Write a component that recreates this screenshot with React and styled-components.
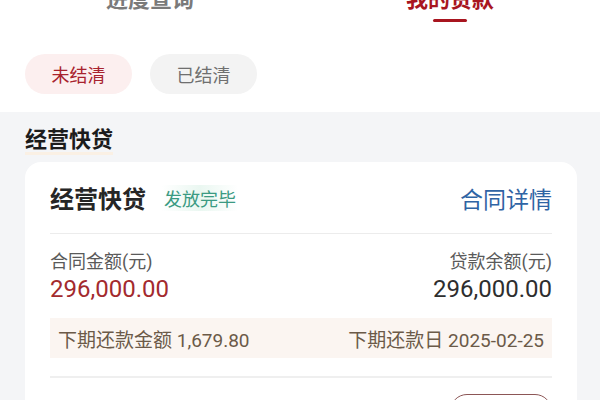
import React from 'react'
import styled, { createGlobalStyle } from 'styled-components'

const GlobalStyle = createGlobalStyle`
  html, body {
    margin: 0;
    padding: 0;
    background: #f4f5f7;
    font-family: Roboto, "Noto Sans CJK SC", "Noto Sans", sans-serif;
    overflow: hidden;
  }
`

const Header = styled.header`
  background: #ffffff;
  padding-bottom: 18px;
`

const TabBar = styled.nav`
  display: flex;
  margin-top: -16px;
  height: 40px;
`

const Tab = styled.div`
  flex: 1;
  display: flex;
  flex-direction: column;
  align-items: center;
  font-size: 22px;
  font-weight: 700;
  line-height: 32px;
  color: ${p => (p.$active ? '#a8151f' : '#7a7a7a')};
  &::after {
    content: '';
    width: 34px;
    height: 3px;
    border-radius: 2px;
    margin-top: 3px;
    background: ${p => (p.$active ? '#a8151f' : 'transparent')};
  }
`

const FilterRow = styled.div`
  display: flex;
  gap: 18px;
  padding: 30px 25px 0;
`

const Chip = styled.button`
  height: 40px;
  width: 107px;
  padding: 0;
  border: none;
  border-radius: 20px;
  font-family: inherit;
  font-size: 18px;
  background: ${p => (p.$active ? '#fcefef' : '#f3f3f3')};
  color: ${p => (p.$active ? '#a8232e' : '#6f6f6f')};
`

const Section = styled.section`
  padding: 13px 23px 0 25px;
`

const SectionTitle = styled.h2`
  display: inline-block;
  margin: 0 0 7px;
  font-size: 22px;
  font-weight: 700;
  line-height: 30px;
  color: #1c1c1c;
  background: linear-gradient(to top, #faf0e4 0, #faf0e4 3px, transparent 3px);
`

const Card = styled.article`
  background: #ffffff;
  border-radius: 16px;
  padding: 0 25px;
`

const CardHeader = styled.div`
  display: flex;
  align-items: center;
  height: 71px;
  border-bottom: 1px solid #ececec;
`

const CardTitle = styled.span`
  font-size: 24px;
  font-weight: 700;
  color: #262626;
`

const Status = styled.span`
  margin-left: 16px;
  padding: 0 2px;
  font-size: 18px;
  color: #3b9a82;
  background: linear-gradient(to right, #ffffff, #eaf7f1 50%, #ffffff);
`

const DetailLink = styled.a`
  margin-left: auto;
  font-size: 23px;
  color: #2f64a4;
`

const Amounts = styled.div`
  display: flex;
  justify-content: space-between;
  padding-top: 16px;
`

const AmountCol = styled.div`
  display: flex;
  flex-direction: column;
  align-items: ${p => (p.$right ? 'flex-end' : 'flex-start')};
`

const AmountLabel = styled.span`
  font-size: 18px;
  line-height: 24px;
  color: #5a5a5a;
`

const AmountValue = styled.span`
  font-size: 24px;
  line-height: 30px;
  color: ${p => (p.$red ? '#a32a2e' : '#2e2e2e')};
`

const RepayBox = styled.div`
  display: flex;
  justify-content: space-between;
  align-items: center;
  height: 40px;
  margin-top: 14px;
  padding: 0 8px;
  background: #fbf5f1;
  font-size: 19px;
  color: #6b5a48;
`

const Footer = styled.div`
  display: flex;
  justify-content: space-between;
  align-items: flex-start;
  margin-top: 18px;
  padding-top: 16px;
  border-top: 2px solid #efefef;
`

const FooterText = styled.span`
  font-size: 15px;
  color: #c4c4c4;
  margin-left: 6px;
  margin-top: 4px;
`

const OutlineButton = styled.button`
  width: 102px;
  height: 34px;
  border: 1.5px solid #8c5656;
  border-radius: 17px;
  background: #fff;
  font-family: inherit;
  font-size: 16px;
  color: #8c3b3b;
`

export default function App() {
  return (
    <>
      <GlobalStyle />
      <Header>
        <TabBar>
          <Tab>进度查询</Tab>
          <Tab $active>我的贷款</Tab>
        </TabBar>
        <FilterRow>
          <Chip $active>未结清</Chip>
          <Chip>已结清</Chip>
        </FilterRow>
      </Header>
      <Section>
        <SectionTitle>经营快贷</SectionTitle>
        <Card>
          <CardHeader>
            <CardTitle>经营快贷</CardTitle>
            <Status>发放完毕</Status>
            <DetailLink>合同详情</DetailLink>
          </CardHeader>
          <Amounts>
            <AmountCol>
              <AmountLabel>合同金额(元)</AmountLabel>
              <AmountValue $red>296,000.00</AmountValue>
            </AmountCol>
            <AmountCol $right>
              <AmountLabel>贷款余额(元)</AmountLabel>
              <AmountValue>296,000.00</AmountValue>
            </AmountCol>
          </Amounts>
          <RepayBox>
            <span>下期还款金额 1,679.80</span>
            <span>下期还款日 2025-02-25</span>
          </RepayBox>
          <Footer>
            <FooterText>还款记录</FooterText>
            <OutlineButton>提前还款</OutlineButton>
          </Footer>
        </Card>
      </Section>
    </>
  )
}
